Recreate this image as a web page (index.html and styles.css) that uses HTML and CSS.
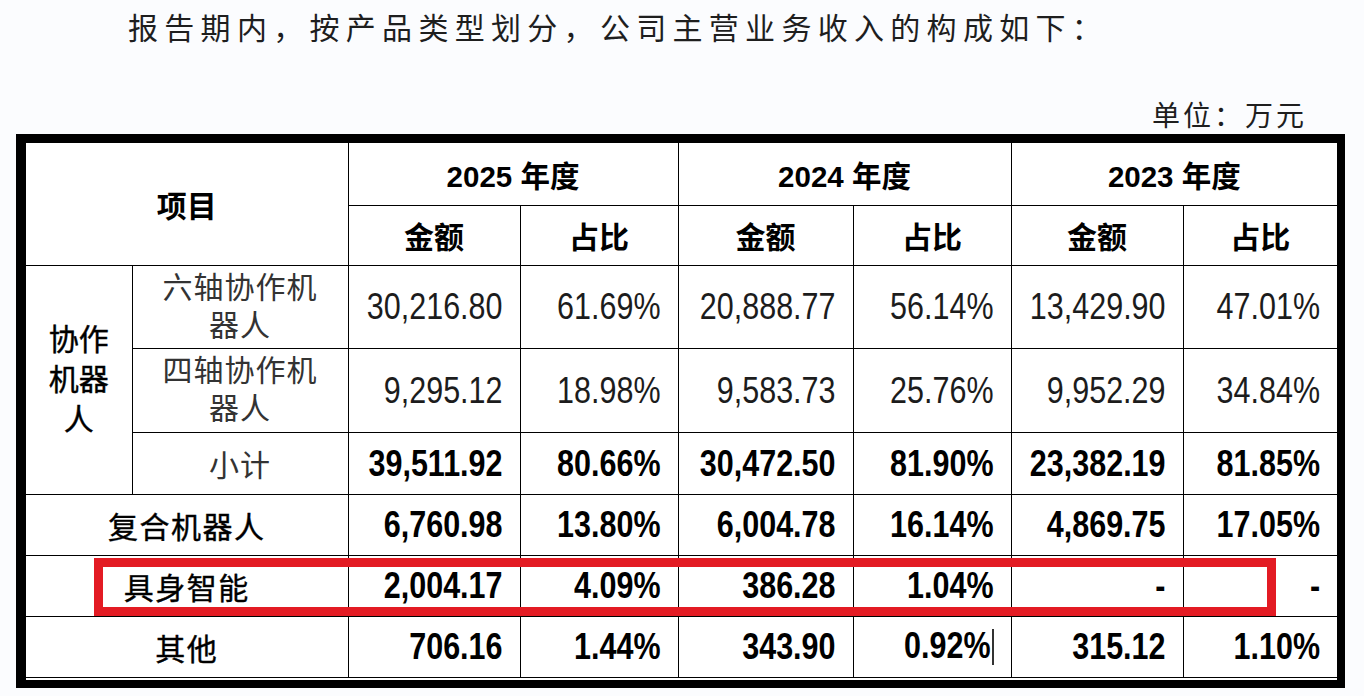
FILE: index.html
```html
<!DOCTYPE html>
<html lang="zh-CN">
<head>
<meta charset="utf-8">
<title>主营业务收入构成</title>
<link rel="stylesheet" href="styles.css">
</head>
<body>
<p class="intro">报告期内，按产品类型划分，公司主营业务收入的构成如下：</p>
<p class="unit">单位：万元</p>
<div class="frame">
  <table class="rev">
    <colgroup>
      <col class="c1"><col class="c2"><col class="c3"><col class="c4"><col class="c5"><col class="c6"><col class="c7"><col class="c8">
    </colgroup>
    <tr class="h1">
      <th colspan="2" rowspan="2">项目</th>
      <th colspan="2" class="yr">2025 年度</th>
      <th colspan="2" class="yr">2024 年度</th>
      <th colspan="2" class="yr">2023 年度</th>
    </tr>
    <tr class="h2">
      <th>金额</th><th>占比</th><th>金额</th><th>占比</th><th>金额</th><th>占比</th>
    </tr>
    <tr class="t1">
      <td rowspan="3" class="grp"><span class="ln">协作</span><span class="ln">机器</span><span class="ln">人</span></td>
      <td class="sub"><span class="ln">六轴协作机</span><span class="ln">器人</span></td>
      <td class="num"><span>30,216.80</span></td><td class="num"><span>61.69%</span></td>
      <td class="num"><span>20,888.77</span></td><td class="num"><span>56.14%</span></td>
      <td class="num"><span>13,429.90</span></td><td class="num"><span>47.01%</span></td>
    </tr>
    <tr class="t2">
      <td class="sub"><span class="ln">四轴协作机</span><span class="ln">器人</span></td>
      <td class="num"><span>9,295.12</span></td><td class="num"><span>18.98%</span></td>
      <td class="num"><span>9,583.73</span></td><td class="num"><span>25.76%</span></td>
      <td class="num"><span>9,952.29</span></td><td class="num"><span>34.84%</span></td>
    </tr>
    <tr class="b r62">
      <td class="sub">小计</td>
      <td class="num"><span>39,511.92</span></td><td class="num"><span>80.66%</span></td>
      <td class="num"><span>30,472.50</span></td><td class="num"><span>81.90%</span></td>
      <td class="num"><span>23,382.19</span></td><td class="num"><span>81.85%</span></td>
    </tr>
    <tr class="b r61">
      <td colspan="2" class="lbl">复合机器人</td>
      <td class="num"><span>6,760.98</span></td><td class="num"><span>13.80%</span></td>
      <td class="num"><span>6,004.78</span></td><td class="num"><span>16.14%</span></td>
      <td class="num"><span>4,869.75</span></td><td class="num"><span>17.05%</span></td>
    </tr>
    <tr class="b r61">
      <td colspan="2" class="lbl">具身智能</td>
      <td class="num"><span>2,004.17</span></td><td class="num"><span>4.09%</span></td>
      <td class="num"><span>386.28</span></td><td class="num"><span>1.04%</span></td>
      <td class="num"><span>-</span></td><td class="num"><span>-</span></td>
    </tr>
    <tr class="b r61">
      <td colspan="2" class="lbl">其他</td>
      <td class="num"><span>706.16</span></td><td class="num"><span>1.44%</span></td>
      <td class="num"><span>343.90</span></td><td class="num"><span>0.92%</span><i class="caret"></i></td>
      <td class="num"><span>315.12</span></td><td class="num"><span>1.10%</span></td>
    </tr>
  </table>
  <div class="mark"></div>
</div>
</body>
</html>
```
FILE: styles.css
```css
html, body {
  margin: 0;
  padding: 0;
}
body {
  width: 1364px;
  height: 696px;
  overflow: hidden;
  background: #fbfcfe;
  font-family: "Noto Sans CJK SC", sans-serif;
  color: #111;
}
.intro {
  margin: 11px 0 0 128px;
  font-size: 30px;
  line-height: 30px;
  letter-spacing: 6.3px;
  font-weight: 400;
  color: #1e1e1e;
}
.unit {
  margin: 59px 0 0 0;
  padding-right: 57px;
  text-align: right;
  font-size: 28px;
  line-height: 28px;
  letter-spacing: 3px;
  font-weight: 400;
  color: #1e1e1e;
}
.frame {
  position: relative;
  margin: 6px 0 0 16px;
  width: 1329px;
  box-sizing: border-box;
  border-style: solid;
  border-color: #000;
  border-width: 9px 8px 8px 10px;
  padding-bottom: 2px;
  background: #fff;
}
.rev {
  border-collapse: collapse;
  table-layout: fixed;
  width: 1311px;
}
.rev td, .rev th {
  border: 1px solid #000;
  padding: 0;
  vertical-align: middle;
}
.rev tr:first-child th { border-top: none; }
.rev tr > :first-child { border-left: none; }
.rev tr > :last-child { border-right: none; }
.rev tr.t2 > :first-child, .rev tr.r62 > :first-child { border-left: 1px solid #000; }

.c1 { width: 106px; }
.c2 { width: 216px; }
.c3 { width: 172px; }
.c4 { width: 158px; }
.c5 { width: 175px; }
.c6 { width: 158px; }
.c7 { width: 172px; }
.c8 { width: 154px; }

.h1 { height: 62px; }
.h2 { height: 60px; }
.t1 { height: 83px; }
.t2 { height: 84px; }
.r62 { height: 62px; }
.r61 { height: 61px; }

.rev th {
  font-family: "Liberation Sans", "Noto Sans CJK SC", sans-serif;
  font-weight: bold;
  font-size: 30px;
  color: #000;
  text-align: center;
}
.rev th.yr { font-size: 29.5px; }

.num {
  text-align: right;
  padding-right: 17px !important;
  font-family: "Liberation Sans", sans-serif;
  font-size: 30.5px;
  color: #1c1c1c;
  white-space: nowrap;
}
.num span {
  display: inline-block;
  transform: scaleY(1.22);
}
.b .num {
  font-weight: bold;
  color: #000;
}
.grp {
  text-align: center;
  font-family: "Liberation Sans", "Noto Sans CJK SC", sans-serif;
  font-size: 30px;
  color: #000;
  -webkit-text-stroke: 0.4px #000;
}
.grp .ln {
  display: block;
  height: 40px;
  line-height: 40px;
}
.sub {
  text-align: center;
  font-family: "Liberation Sans", "Noto Sans CJK SC", sans-serif;
  font-size: 30px;
  letter-spacing: 1px;
  color: #333;
}
.sub .ln {
  display: block;
  height: 38px;
  line-height: 38px;
}
.lbl {
  text-align: center;
  font-size: 30px;
  letter-spacing: 1.5px;
  color: #000;
  -webkit-text-stroke: 0.4px #000;
}
.caret {
  display: inline-block;
  width: 2px;
  height: 36px;
  margin-left: 1px;
  background: #333;
  vertical-align: middle;
}
.mark {
  position: absolute;
  left: 68px;
  top: 415px;
  width: 1182px;
  height: 58px;
  box-sizing: border-box;
  border: 9px solid #e31b23;
  pointer-events: none;
}
```
